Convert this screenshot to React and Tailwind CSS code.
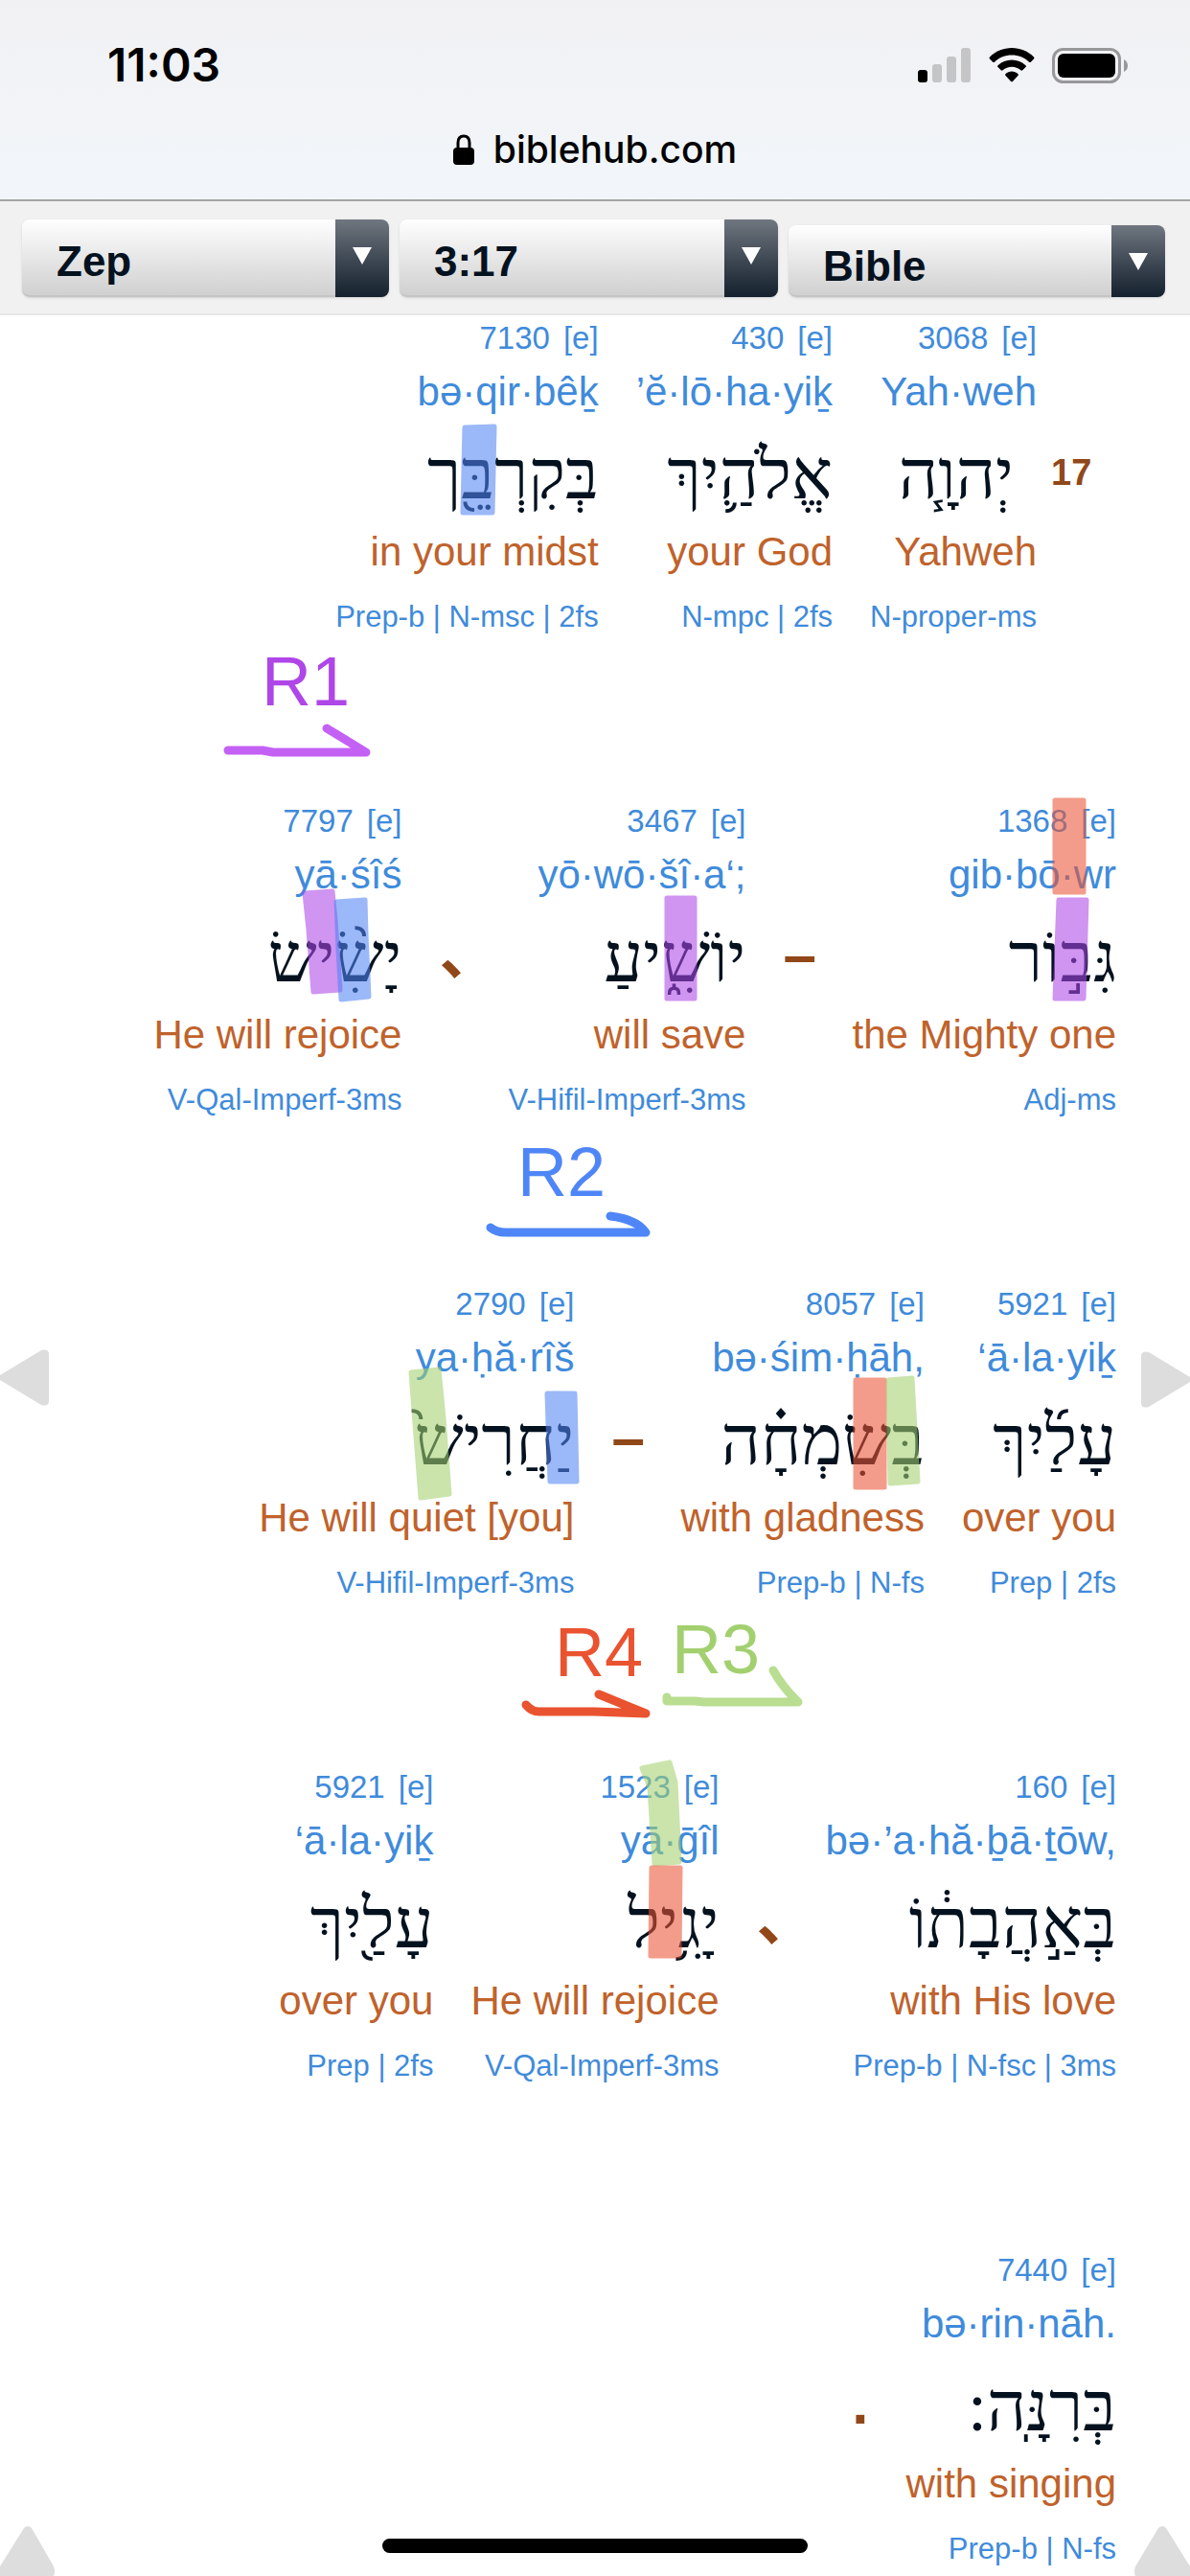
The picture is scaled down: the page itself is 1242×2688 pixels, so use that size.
const verseRows = [
  {
    number: "17",
    cells: [
      { strong: "3068", translit: "Yah·weh", hebrew: "יְהוָ֧ה", pad: true, gloss: "Yahweh", grammar: "N-proper-ms" },
      { strong: "430", translit: "’ĕ·lō·ha·yiḵ", hebrew: "אֱלֹהַ֛יִךְ", gloss: "your God", grammar: "N-mpc | 2fs" },
      { strong: "7130", translit: "bə·qir·bêḵ", hebrew: "בְּקִרְבֵּ֖ך", gloss: "in your midst", grammar: "Prep-b | N-msc | 2fs" },
    ],
  },
  {
    cells: [
      { strong: "1368", translit: "gib·bō·wr", hebrew: "גִּבּ֣וֹר", gloss: "the Mighty one", grammar: "Adj-ms" },
      { mark: "–" },
      { strong: "3467", translit: "yō·wō·šî·a‘;", hebrew: "יוֹשִׁ֑יעַ", gloss: "will save", grammar: "V-Hifil-Imperf-3ms" },
      { mark: "、" },
      { strong: "7797", translit: "yā·śîś", hebrew: "יָשִׂ֨ישׂ", gloss: "He will rejoice", grammar: "V-Qal-Imperf-3ms" },
    ],
  },
  {
    cells: [
      { strong: "5921", translit: "‘ā·la·yiḵ", hebrew: "עָלַ֜יִךְ", gloss: "over you", grammar: "Prep | 2fs" },
      { strong: "8057", translit: "bə·śim·ḥāh,", hebrew: "בְּשִׂמְחָ֗ה", gloss: "with gladness", grammar: "Prep-b | N-fs" },
      { mark: "–" },
      { strong: "2790", translit: "ya·ḥă·rîš", hebrew: "יַחֲרִישׁ֙", gloss: "He will quiet [you]", grammar: "V-Hifil-Imperf-3ms" },
    ],
  },
  {
    cells: [
      { strong: "160", translit: "bə·’a·hă·ḇā·ṯōw,", hebrew: "בְּאַ֣הֲבָת֔וֹ", gloss: "with His love", grammar: "Prep-b | N-fsc | 3ms" },
      { mark: "、" },
      { strong: "1523", translit: "yā·ḡîl", hebrew: "יָגִ֥יל", gloss: "He will rejoice", grammar: "V-Qal-Imperf-3ms" },
      { strong: "5921", translit: "‘ā·la·yiḵ", hebrew: "עָלַ֖יִךְ", gloss: "over you", grammar: "Prep | 2fs" },
    ],
  },
  {
    cells: [
      { strong: "7440", translit: "bə·rin·nāh.", hebrew: "בְּרִנָּֽה:", gloss: "with singing", grammar: "Prep-b | N-fs" },
      { mark: "." },
    ],
  },
];

// Highlighter strokes
const highlights = [
  ["#5083f4", "M485 446L516 445L514 535L483 535Z"],
  ["#ec5334", "M1101 835H1131V931H1101Z"],
  ["#ac46e8", "M1105 939L1134 939L1131 1042L1101 1042Z"],
  ["#ac46e8", "M696 937H725V1042H696Z"],
  ["#ac46e8", "M318 932L347 930L350 960L355 1033L327 1035L322 970Z"],
  ["#5083f4", "M351 941L381 939L382 975L385 1040L356 1043L353 990Z"],
  ["#a3d06f", "M429 1432L458 1429L463 1480L469 1559L439 1563L433 1485Z"],
  ["#5083f4", "M571 1454L600 1454L602 1546L574 1546Z"],
  ["#ec5334", "M893 1440H923V1552H893Z"],
  ["#a3d06f", "M927 1440L952 1438L954 1475L958 1546L929 1548Z"],
  ["#a3d06f", "M670 1845L699 1839L705 1860L709 1943L683 1945L678 1865Z"],
  ["#ec5334", "M680 1949L710 1949L709 2041L679 2041Z"],
];

const Select = ({ label, value, size, text }) => (
  <div className={`relative ${size}`}>
    <select
      aria-label={label}
      className={`h-full w-full appearance-none rounded-lg border-b-2 border-[#c4c4c4] bg-linear-to-b from-white to-[#d0d0d0] pl-9 text-[44px] leading-[60px] font-bold text-[#04121f] shadow-sm ${text}`}
    >
      <option>{value}</option>
    </select>
    <span className="pointer-events-none absolute inset-y-0 right-0 flex w-14 justify-center rounded-r-lg bg-linear-to-b from-[#707780] to-[#15212e] pt-[29px]">
      <svg width="20" height="18" viewBox="0 0 20 18" fill="#fff">
        <path d="M0 0H20L10 18Z" />
      </svg>
    </span>
  </div>
);

const Word = ({ word }) => (
  <div className="flex flex-col items-end whitespace-pre text-[#3f8bdb]">
    <a href="#strongs" className="flex gap-[14px] text-[33px] leading-[48px]">
      <span>{word.strong}</span>
      <span>[e]</span>
    </a>
    <a href="#translit" className="text-[42px] leading-[64px]">{word.translit}</a>
    <span
      dir="rtl"
      lang="he"
      className={`h-[104px] font-['Liberation_Serif','DejaVu_Sans',serif] text-[72px] leading-[110px] text-[#04121f] ${word.pad ? "pr-6" : ""}`}
    >
      {word.hebrew}
    </span>
    <span className="text-[42px] leading-[62px] text-[#c0622b]">{word.gloss}</span>
    <a href="#grammar" className="text-[31px] leading-[74px]">{word.grammar}</a>
  </div>
);

const Mark = ({ children }) => (
  <span className="w-[33px] overflow-visible pt-[110px] text-right font-['Liberation_Sans','Noto_Sans_CJK_JP',sans-serif] text-[62px] leading-[105px] font-bold text-[#914819]">
    {children}
  </span>
);

export default function App() {
  return (
    <div className="relative flex h-screen flex-col overflow-hidden bg-white font-['Liberation_Sans',Arial,sans-serif]">
      <header className="flex h-[210px] shrink-0 flex-col border-b-2 border-[#a3a4a6] bg-linear-to-b from-[#f1f1f3] to-[#f2f6fa] font-['Inter',sans-serif] text-black">
        <div className="flex items-center justify-between pt-9 pr-16 pl-28">
          <time className="text-[48px] leading-[64px] font-semibold">11:03</time>
          <div className="flex items-center gap-[18px]">
            <svg width="56" height="36" viewBox="0 0 56 36" role="img" aria-label="Signal">
              <rect x="0" y="23" width="10" height="13" rx="3" />
              <rect x="15" y="17" width="10" height="19" rx="3" fill="#c5c5c7" />
              <rect x="30" y="9" width="10" height="27" rx="3" fill="#c5c5c7" />
              <rect x="45" y="0" width="10" height="36" rx="3" fill="#c5c5c7" />
            </svg>
            <svg width="48" height="36" viewBox="0 0 48 36" role="img" aria-label="Wi-Fi">
              <path d="M24 0C33 0 41 3.500 47 9.500C47.600 10.100 47.600 10.900 47 11.500L43.800 14.700C43.200 15.200 42.500 15.200 42 14.700C37 10 31 7.500 24 7.500S11 10 6 14.700C5.500 15.200 4.800 15.200 4.200 14.700L1 11.500C.4 10.900 .4 10.100 1 9.500C7 3.500 15 0 24 0Z" />
              <path d="M24 12.500C29.600 12.500 34.600 14.600 38.500 18.200C39.100 18.800 39.100 19.500 38.500 20.100L35.200 23.300C34.700 23.800 34 23.800 33.400 23.300C30.800 21 27.600 19.700 24 19.700S17.200 21 14.600 23.300C14 23.800 13.300 23.800 12.800 23.300L9.500 20.100C8.900 19.500 8.900 18.800 9.500 18.200C13.400 14.600 18.400 12.500 24 12.500Z" />
              <path d="M24 24.600C26.500 24.600 28.700 25.500 30.400 27C31 27.600 31 28.300 30.400 28.900L24.900 34.900C24.400 35.400 23.600 35.400 23.100 34.900L17.600 28.900C17 28.300 17 27.600 17.600 27C19.300 25.500 21.500 24.600 24 24.600Z" />
            </svg>
            <svg width="80" height="37" viewBox="0 0 80 37" role="img" aria-label="Battery">
              <rect x="1.500" y="1.500" width="69" height="34" rx="10" fill="none" stroke="#98989b" strokeWidth="3" />
              <rect x="6" y="6" width="60" height="25" rx="6" />
              <path d="M75 12Q79 14 79 18.500T75 25Z" fill="#98989b" />
            </svg>
          </div>
        </div>
        <div className="flex items-center justify-center gap-5 pt-7">
          <svg width="22" height="32" viewBox="0 0 22 32" role="img" aria-label="Secure">
            <path d="M5 15V9Q5 2 11 2T17 9V15" fill="none" stroke="#000" strokeWidth="3" />
            <rect x="0" y="14" width="22" height="18" rx="4" />
          </svg>
          <span className="text-[39px] leading-[56px] font-medium">biblehub.com</span>
        </div>
      </header>

      <nav className="flex h-[119px] shrink-0 items-end gap-[11px] border-b-2 border-[#e6e6e6] bg-[#f1f1f1] pr-[26px] pb-[17px] pl-[23px]">
        <Select label="Book" value="Zep" size="h-[81px] flex-[383]" text="pt-2" />
        <Select label="Chapter and verse" value="3:17" size="h-[81px] flex-[395]" text="pt-2" />
        <Select label="Version" value="Bible" size="h-[75px] flex-[393]" text="pt-3" />
      </nav>

      <main className="flex flex-col gap-[152px] pr-[77px]">
        {verseRows.map((row, i) => (
          <section key={i} className="flex flex-row-reverse gap-[39px]">
            {row.number && (
              <span className="-ml-6 w-[68px] pt-[110px] text-[38px] leading-[108px] font-bold text-[#914819]">
                {row.number}
              </span>
            )}
            {row.cells.map((cell, j) =>
              cell.mark ? <Mark key={j}>{cell.mark}</Mark> : <Word key={j} word={cell} />
            )}
          </section>
        ))}
      </main>

      <button aria-label="Previous verse" className="absolute top-[1408px] left-0">
        <svg width="52" height="60" viewBox="0 0 52 60" fill="#ddd">
          <path d="M0 27L43 1Q51 -1 51 5V54Q51 60 43 58L0 32Z" />
        </svg>
      </button>
      <button aria-label="Next verse" className="absolute top-[1410px] right-0">
        <svg width="52" height="60" viewBox="0 0 52 60" fill="#ddd">
          <path d="M52 27L9 1Q1 -1 1 5V54Q1 60 9 58L52 32Z" />
        </svg>
      </button>
      <button aria-label="Page top, left" className="absolute bottom-0 left-0">
        <svg width="58" height="53" viewBox="0 0 58 53" fill="#ddd">
          <path d="M0 43L25 3Q29 -1 33 3L56 43Q58 48 56 53H0Z" />
        </svg>
      </button>
      <button aria-label="Page top, right" className="absolute right-0 bottom-0">
        <svg width="58" height="53" viewBox="0 0 58 53" fill="#ddd">
          <path d="M58 43L33 3Q29 -1 25 3L1 43Q-1 48 1 53H58Z" />
        </svg>
      </button>

      <div className="pointer-events-none absolute top-0 right-0 h-[2688px] w-[1242px]">
        <svg width="1242" height="2688" viewBox="0 0 1242 2688" fill="none" strokeLinecap="round" strokeLinejoin="round">
          {highlights.map(([color, d], i) => (
            <path key={i} d={d} fill={color} stroke={color} strokeWidth="5" opacity="0.57" />
          ))}
          <path d="M238 783H274L285 785H382L341 760" stroke="#c461f5" strokeWidth="9" />
          <path d="M512 1281Q518 1286 528 1286H674Q664 1272 637 1269" stroke="#4f86f7" strokeWidth="9" />
          <path d="M549 1779Q555 1786 562 1786H620L674 1788L625 1768" stroke="#ea5330" strokeWidth="9" />
          <path d="M696 1771V1775H725L735 1776H833Q817 1761 807 1743" stroke="#b9dd91" strokeWidth="9" />
        </svg>
        <span className="absolute top-[670px] left-[273px] text-[72px] leading-[82px] text-[#af46e8]">R1</span>
        <span className="absolute top-[1182px] left-[540px] text-[72px] leading-[82px] text-[#4f86f7]">R2</span>
        <span className="absolute top-[1683px] left-[579px] text-[72px] leading-[82px] text-[#ea5330]">R4</span>
        <span className="absolute top-[1680px] left-[701px] text-[72px] leading-[82px] text-[#a3d06f]">R3</span>
      </div>

      <div className="absolute bottom-6 left-1/2 h-[15px] w-[444px] -translate-x-1/2 rounded-full bg-black" />
    </div>
  );
}
